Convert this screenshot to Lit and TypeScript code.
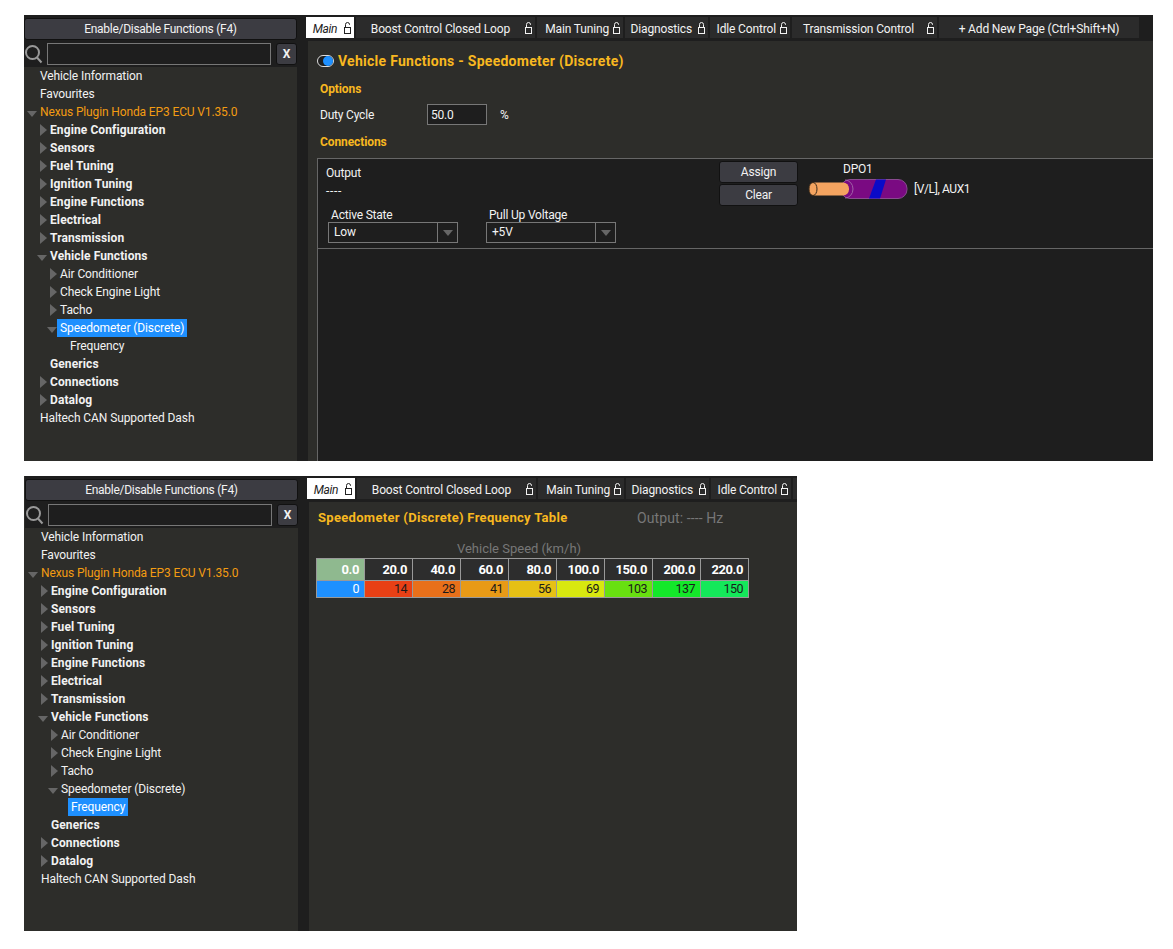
import { LitElement, html, css, svg } from 'lit';
import { customElement, property } from 'lit/decorators.js';
import { classMap } from 'lit/directives/class-map.js';

const FONT = css`Roboto, "Noto Sans", sans-serif`;

interface TreeNode {
    label: string;
    depth: number;
    arrow?: 'right' | 'down';
    bold?: boolean;
    orange?: boolean;
}

const TREE: TreeNode[] = [
    { label: 'Vehicle Information', depth: 0 },
    { label: 'Favourites', depth: 0 },
    { label: 'Nexus Plugin Honda EP3 ECU V1.35.0', depth: 0, arrow: 'down', orange: true },
    { label: 'Engine Configuration', depth: 1, arrow: 'right', bold: true },
    { label: 'Sensors', depth: 1, arrow: 'right', bold: true },
    { label: 'Fuel Tuning', depth: 1, arrow: 'right', bold: true },
    { label: 'Ignition Tuning', depth: 1, arrow: 'right', bold: true },
    { label: 'Engine Functions', depth: 1, arrow: 'right', bold: true },
    { label: 'Electrical', depth: 1, arrow: 'right', bold: true },
    { label: 'Transmission', depth: 1, arrow: 'right', bold: true },
    { label: 'Vehicle Functions', depth: 1, arrow: 'down', bold: true },
    { label: 'Air Conditioner', depth: 2, arrow: 'right' },
    { label: 'Check Engine Light', depth: 2, arrow: 'right' },
    { label: 'Tacho', depth: 2, arrow: 'right' },
    { label: 'Speedometer (Discrete)', depth: 2, arrow: 'down' },
    { label: 'Frequency', depth: 3 },
    { label: 'Generics', depth: 1, bold: true },
    { label: 'Connections', depth: 1, arrow: 'right', bold: true },
    { label: 'Datalog', depth: 1, arrow: 'right', bold: true },
    { label: 'Haltech CAN Supported Dash', depth: 0 },
];

interface Tab {
    label: string;
    width: number;
    gap: number;
    locked?: boolean;
    noLock?: boolean;
    active?: boolean;
}

const TABS: Tab[] = [
    { label: 'Main', width: 48, gap: 7, active: true },
    { label: 'Boost Control Closed Loop', width: 179, gap: 15 },
    { label: 'Main Tuning', width: 86, gap: 4 },
    { label: 'Diagnostics', width: 83, gap: 6, locked: true },
    { label: 'Idle Control', width: 80, gap: 4 },
    { label: 'Transmission Control', width: 145, gap: 13 },
    { label: '+ Add New Page (Ctrl+Shift+N)', width: 200, gap: 0, noLock: true },
];

const lockIcon = (closed: boolean) => html`
    <svg width="7" height="12" viewBox="0 0 7 12" fill="none" stroke="currentColor" stroke-width="1">
        ${svg`<rect x="0.5" y="5.5" width="6" height="6"></rect>`}
        ${closed
            ? svg`<path d="M1.5 5.5V2.5a2 2 0 0 1 4 0v3"></path>`
            : svg`<path d="M1.5 5.5V2.5a2 2 0 0 1 4 0v.5"></path>`}
    </svg>
`;

@customElement('nav-sidebar')
export class NavSidebar extends LitElement {
    static override styles = css`
        :host {
            display: block;
            box-sizing: border-box;
            height: 100%;
            background: #2d2d2a;
            color: #f2f2f2;
            font-family: ${FONT};
            font-size: 12px;
            letter-spacing: -0.1px;
        }
        .top {
            background: #1e1e1e;
            height: 26px;
            padding-top: 3px;
            box-sizing: border-box;
        }
        .toggle {
            box-sizing: border-box;
            height: 22px;
            line-height: 21px;
            text-align: center;
            letter-spacing: -0.28px;
            border: 1px solid #111;
            border-radius: 3px;
            background: #3c3c42;
        }
        .search {
            display: flex;
            align-items: center;
            height: 26px;
            background: #1e1e1e;
            padding-left: 1px;
        }
        .search svg { flex: none; }
        .search .field {
            box-sizing: border-box;
            width: 224px;
            height: 22px;
            margin-left: 4px;
            background: #1e1e1e;
            border: 1px solid #777;
        }
        .search .x {
            box-sizing: border-box;
            width: 21px;
            height: 22px;
            margin-left: 5px;
            line-height: 20px;
            text-align: center;
            font-weight: 700;
            background: #3c3c42;
            border: 1px solid #111;
            border-radius: 3px;
        }
        .row {
            display: flex;
            align-items: center;
            height: 18px;
            white-space: nowrap;
        }
        .arrow { flex: none; }
        .arrow.right {
            margin-right: 3px;
            border-left: 7px solid #666;
            border-top: 6px solid transparent;
            border-bottom: 6px solid transparent;
        }
        .arrow.down {
            margin-top: 3px;
            margin-right: 3px;
            border-top: 6px solid #666;
            border-left: 5px solid transparent;
            border-right: 5px solid transparent;
        }
        .label { padding: 0 3px; line-height: 18px; margin-left: -3px; }
        .bold { font-weight: 700; letter-spacing: 0.1px; }
        .orange { color: #f39c12; letter-spacing: -0.13px; }
        .selected { background: #1e90ff; color: #fff; }
    `;

    @property() selected = '';

    private renderRow(node: TreeNode) {
        const textX = 16 + node.depth * 10;
        const arrowX = node.arrow === 'down' ? textX - 13 : textX - 10;
        return html`
            <div class="row" style="padding-left:${node.arrow ? arrowX : textX}px">
                ${node.arrow ? html`<span class="arrow ${node.arrow}"></span>` : null}
                <span class=${classMap({
                    label: true,
                    bold: !!node.bold,
                    orange: !!node.orange,
                    selected: node.label === this.selected,
                })}>${node.label}</span>
            </div>
        `;
    }

    override render() {
        return html`
            <div class="top"><div class="toggle">Enable/Disable Functions (F4)</div></div>
            <div class="search">
                <svg width="18" height="20" viewBox="0 0 18 20" fill="none" stroke="#999" stroke-width="2">
                    <circle cx="7.5" cy="8.5" r="6.5"></circle>
                    <path d="M12 13.5l4.5 5"></path>
                </svg>
                <div class="field"></div>
                <div class="x">X</div>
            </div>
            <div>${TREE.map((n) => this.renderRow(n))}</div>
        `;
    }
}

@customElement('page-tabs')
export class PageTabs extends LitElement {
    static override styles = css`
        :host {
            display: flex;
            gap: 2px;
            height: 26px;
            box-sizing: border-box;
            padding-top: 2px;
            background: #1e1e1e;
            color: #f2f2f2;
            font-family: ${FONT};
            font-size: 12px;
            letter-spacing: -0.15px;
            overflow: hidden;
            white-space: nowrap;
        }
        .tab {
            flex: none;
            box-sizing: border-box;
            display: flex;
            align-items: center;
            justify-content: flex-end;
            height: 21px;
            padding: 2px 3px 0 0;
            background: #2b2b2b;
        }
        .tab.center { justify-content: center; padding-right: 0; }
        .tab.stub { flex: 1; padding: 0; }
        .tab svg { flex: none; margin-top: -2px; }
        .tab.active {
            background: #fff;
            color: #222;
            font-style: italic;
            letter-spacing: -0.4px;
        }
    `;

    // tabs past this count lie outside the narrower window
    @property({ type: Number }) visible = TABS.length;

    override render() {
        const shown = TABS.slice(0, this.visible);
        return html`
            ${shown.map((t) => html`
                <div
                    class=${classMap({ tab: true, active: !!t.active, center: !!t.noLock })}
                    style="width:${t.width}px;gap:${t.gap}px"
                >
                    <span>${t.label}</span>
                    ${t.noLock ? null : lockIcon(!!t.locked)}
                </div>
            `)}
            ${shown.length < TABS.length ? html`<div class="tab stub"></div>` : null}
        `;
    }
}

const HEADERS = ['0.0', '20.0', '40.0', '60.0', '80.0', '100.0', '150.0', '200.0', '220.0'];
const CELLS: [number, string][] = [
    [0, '#1e90ff'],
    [14, '#e84015'],
    [28, '#e8701a'],
    [41, '#e89a16'],
    [56, '#e6c015'],
    [69, '#d8e80f'],
    [103, '#68e010'],
    [137, '#14e82a'],
    [150, '#14e85a'],
];

@customElement('app-root')
export class AppRoot extends LitElement {
    static override styles = css`
        :host {
            display: block;
            background: #fff;
            height: 949px;
            padding: 15px 0 0 24px;
            box-sizing: border-box;
            font-family: ${FONT};
            font-size: 12px;
            letter-spacing: -0.2px;
            color: #f2f2f2;
        }
        .window {
            display: grid;
            grid-template-columns: 273px 11px 1fr;
            background: #1e1e1e;
            overflow: hidden;
        }
        .window.first { width: 1129px; height: 446px; }
        .window.second {
            width: 773px;
            height: 455px;
            margin-top: 15px;
            grid-template-columns: 274px 11px 1fr;
        }
        .window.second nav-sidebar { padding-left: 1px; }
        .strip { background: #1e1e1e; }
        .main { display: flex; flex-direction: column; min-width: 0; }
        page-tabs { margin-left: -2px; }
        .body { flex: 1; background: #2d2d2a; min-height: 0; display: flex; flex-direction: column; }

        .title {
            display: flex;
            align-items: center;
            gap: 4px;
            margin: 11px 0 0 9px;
            height: 18px;
            color: #f8b820;
            font-weight: 700;
            font-size: 14px;
            letter-spacing: 0.27px;
        }
        .knob {
            box-sizing: border-box;
            width: 17px;
            height: 12px;
            border-radius: 6px;
            border: 1px solid #ddd;
            background: #1e1e1e;
            display: flex;
            justify-content: flex-end;
        }
        .knob::after {
            content: '';
            width: 10px;
            height: 10px;
            border-radius: 50%;
            background: #1e90ff;
        }
        .section {
            margin: 10px 0 0 12px;
            height: 18px;
            line-height: 18px;
            color: #f8b820;
            font-weight: 700;
            letter-spacing: -0.1px;
        }
        .duty {
            display: flex;
            align-items: center;
            height: 21px;
            margin: 6px 0 0 12px;
        }
        .duty .name { width: 107px; }
        .duty .input {
            box-sizing: border-box;
            width: 60px;
            height: 21px;
            line-height: 20px;
            padding-left: 3px;
            background: #1e1e1e;
            border: 1px solid #777;
        }
        .duty .unit { margin-left: 13px; }
        .section.conn { margin-top: 8px; }

        .box {
            flex: 1;
            margin: 7px 0 0 9px;
            background: #1e1e1e;
            border-left: 1px solid #666;
            border-top: 1px solid #666;
        }
        .box-head {
            display: flex;
            height: 90px;
            box-sizing: border-box;
            border-bottom: 1px solid #666;
        }
        .output { width: 401px; flex: none; }
        .output .lines { padding: 5px 0 0 8px; line-height: 18px; }
        .output .dashes { letter-spacing: 0.7px; }
        .selects { display: flex; gap: 28px; margin: 8px 0 0 10px; }
        .select-label { display: block; height: 14px; line-height: 15px; padding-left: 3px; }
        .select {
            box-sizing: border-box;
            display: flex;
            width: 130px;
            height: 21px;
            line-height: 18px;
            border: 1px solid #777;
        }
        .select .value { flex: 1; padding-left: 5px; }
        .select .drop {
            flex: none;
            width: 19px;
            border-left: 1px solid #777;
            display: flex;
            align-items: center;
            justify-content: center;
        }
        .select .drop::after {
            content: '';
            border-top: 6px solid #666;
            border-left: 5px solid transparent;
            border-right: 5px solid transparent;
        }
        .buttons {
            flex: none;
            display: flex;
            flex-direction: column;
            gap: 1px;
            padding-top: 2px;
            width: 79px;
        }
        .btn {
            box-sizing: border-box;
            height: 22px;
            line-height: 20px;
            text-align: center;
            background: #3c3c42;
            border: 1px solid #111;
            border-radius: 3px;
        }
        .wire-col { margin-left: 10px; }
        .wire-name { line-height: 14px; padding: 3px 0 0 35px; }
        .wire-row { display: flex; align-items: center; gap: 6px; margin-top: 3px; }
        .wire-row span { letter-spacing: -0.4px; }

        .table-title {
            display: flex;
            margin: 6px 0 0 9px;
            height: 20px;
            line-height: 20px;
            white-space: nowrap;
        }
        .table-title b { width: 319px; color: #f8b820; font-size: 13px; letter-spacing: 0.3px; }
        .table-title span { color: #777; font-size: 14px; letter-spacing: 0.1px; }
        .axis {
            width: 406px;
            margin: 12px 0 0 7px;
            height: 18px;
            line-height: 18px;
            text-align: center;
            color: #777;
            font-size: 13px;
            letter-spacing: 0;
        }
        .map {
            display: grid;
            grid-template-columns: repeat(9, 48px);
            box-sizing: border-box;
            width: 433px;
            margin-left: 7px;
            border-top: 1px solid #999;
            border-left: 1px solid #999;
            font-size: 13px;
        }
        .map div {
            box-sizing: border-box;
            text-align: right;
            padding-right: 5px;
            border-right: 1px solid #999;
            border-bottom: 1px solid #999;
        }
        .map .h { height: 22px; line-height: 21px; font-weight: 700; color: #fff; background: #2d2d2d; letter-spacing: -0.4px; }
        .map .h.first { background: #8fb98f; }
        .map .c { height: 17px; line-height: 16px; color: #1a1a1a; font-size: 12.5px; letter-spacing: -0.5px; }
        .map .c.first { color: #fff; }
    `;

    private wire() {
        return html`
            <svg width="100" height="20" viewBox="0 0 100 20">
                <rect x="33" y="0.5" width="66" height="19" rx="9" fill="#7a0a82" stroke="#8a4a90"></rect>
                <path d="M68 0.5h10l-6 19h-11z" fill="#0a0ac8"></path>
                <path d="M37 1a8 9 0 0 1 0 18" fill="none" stroke="#a060a8"></path>
                <rect x="1" y="3.5" width="40" height="13" rx="6" fill="#f4a460"></rect>
                <ellipse cx="5" cy="10" rx="4" ry="6.5" fill="#f4a460" stroke="#3a2a1a"></ellipse>
            </svg>
        `;
    }

    private renderFirst() {
        return html`
            <div class="window first">
                <nav-sidebar selected="Speedometer (Discrete)"></nav-sidebar>
                <div class="strip"></div>
                <div class="main">
                    <page-tabs></page-tabs>
                    <div class="body">
                        <div class="title"><span class="knob"></span>Vehicle Functions - Speedometer (Discrete)</div>
                        <div class="section">Options</div>
                        <div class="duty">
                            <span class="name">Duty Cycle</span>
                            <span class="input">50.0</span>
                            <span class="unit">%</span>
                        </div>
                        <div class="section conn">Connections</div>
                        <div class="box">
                            <div class="box-head">
                                <div class="output">
                                    <div class="lines">Output<br /><span class="dashes">----</span></div>
                                    <div class="selects">
                                        <div>
                                            <span class="select-label">Active State</span>
                                            <div class="select"><span class="value">Low</span><span class="drop"></span></div>
                                        </div>
                                        <div>
                                            <span class="select-label">Pull Up Voltage</span>
                                            <div class="select"><span class="value">+5V</span><span class="drop"></span></div>
                                        </div>
                                    </div>
                                </div>
                                <div class="buttons">
                                    <div class="btn">Assign</div>
                                    <div class="btn">Clear</div>
                                </div>
                                <div class="wire-col">
                                    <div class="wire-name">DPO1</div>
                                    <div class="wire-row">${this.wire()}<span>[V/L], AUX1</span></div>
                                </div>
                            </div>
                        </div>
                    </div>
                </div>
            </div>
        `;
    }

    private renderSecond() {
        return html`
            <div class="window second">
                <nav-sidebar selected="Frequency"></nav-sidebar>
                <div class="strip"></div>
                <div class="main">
                    <page-tabs visible="5"></page-tabs>
                    <div class="body">
                        <div class="table-title"><b>Speedometer (Discrete) Frequency Table</b><span>Output: ---- Hz</span></div>
                        <div class="axis">Vehicle Speed (km/h)</div>
                        <div class="map">
                            ${HEADERS.map((h, i) => html`<div class="h ${i === 0 ? 'first' : ''}">${h}</div>`)}
                            ${CELLS.map(([v, bg], i) => html`<div class="c ${i === 0 ? 'first' : ''}" style="background:${bg}">${v}</div>`)}
                        </div>
                    </div>
                </div>
            </div>
        `;
    }

    override render() {
        return html`${this.renderFirst()}${this.renderSecond()}`;
    }
}
